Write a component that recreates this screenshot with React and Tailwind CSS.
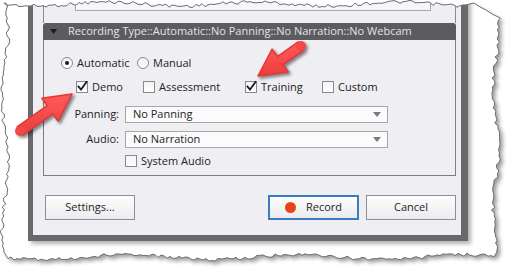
import React from "react";

const FONT = { fontFamily: "'Open Sans', 'Noto Sans', sans-serif" };

// --- torn paper edge ---
function rnd(i) {
  const x = Math.sin(i * 12.9898 + 78.233) * 43758.5453;
  return x - Math.floor(x);
}

function tornPath() {
  const pts = [];
  let k = 0;
  const j = (a) => (rnd(k++) - 0.5) * a;
  for (let x = 4; x <= 468; x += 3) pts.push([x, 4 + Math.sin(x / 23) * 2 + j(3.5)]);
  pts.push([474, 3]);
  pts.push([480, 7]);
  pts.push([486, 10]);
  pts.push([492, 14]);
  for (let y = 18; y <= 254; y += 3) pts.push([496 + Math.sin(y / 19) * 3 + j(4), y]);
  for (let x = 494; x >= 6; x -= 3) pts.push([x, 257 + Math.sin(x / 27) * 2.5 + j(3.5)]);
  for (let y = 252; y >= 2; y -= 3) pts.push([5 + Math.sin(y / 21) * 3 + j(4), y]);
  return "M" + pts.map((p) => p[0].toFixed(1) + "," + p[1].toFixed(1)).join("L") + "Z";
}

const PAPER = tornPath();

// red annotation arrow from tail to tip
function arrowPoints(tail, tip, headLen, headHalf, shaftHalf) {
  const dx = tip[0] - tail[0];
  const dy = tip[1] - tail[1];
  const len = Math.hypot(dx, dy);
  const ux = dx / len, uy = dy / len;
  const nx = -uy, ny = ux;
  const bx = tip[0] - ux * headLen, by = tip[1] - uy * headLen;
  const p = [
    [tail[0] + nx * shaftHalf, tail[1] + ny * shaftHalf],
    [bx + nx * shaftHalf, by + ny * shaftHalf],
    [bx + nx * headHalf, by + ny * headHalf],
    tip,
    [bx - nx * headHalf, by - ny * headHalf],
    [bx - nx * shaftHalf, by - ny * shaftHalf],
    [tail[0] - nx * shaftHalf, tail[1] - ny * shaftHalf],
  ];
  return p.map((q) => q[0].toFixed(1) + "," + q[1].toFixed(1)).join(" ");
}

const Arrow = ({ tail, tip }) => {
  const pts = arrowPoints(tail, tip, 27, 14, 5);
  return (
    <g>
      <g transform="translate(2,2)" filter="url(#ashadow)" opacity="0.45">
        <polygon points={pts} fill="#000" strokeLinejoin="round" stroke="#000" strokeWidth="2" />
        <circle cx={tail[0]} cy={tail[1]} r="5" fill="#000" />
      </g>
      <polygon points={pts} fill="url(#ared)" stroke="#e53636" strokeWidth="1.5" strokeLinejoin="round" />
      <circle cx={tail[0]} cy={tail[1]} r="5" fill="#f04848" />
    </g>
  );
};

const Overlay = () => (
  <svg className="absolute inset-0 pointer-events-none" width="517" height="275" viewBox="0 0 517 275">
    <defs>
      <filter id="pblur" x="-10%" y="-10%" width="120%" height="120%">
        <feGaussianBlur stdDeviation="2" />
      </filter>
      <filter id="ashadow" x="-30%" y="-30%" width="160%" height="160%">
        <feGaussianBlur stdDeviation="1.5" />
      </filter>
      <linearGradient id="ared" x1="0" y1="0" x2="0" y2="1">
        <stop offset="0" stopColor="#ff5a5a" />
        <stop offset="1" stopColor="#ec3d3d" />
      </linearGradient>
      <mask id="outside">
        <rect width="517" height="275" fill="white" />
        <path d={PAPER} fill="black" />
      </mask>
    </defs>
    <path d={"M0,0H517V275H0Z" + PAPER} fill="#ffffff" fillRule="evenodd" />
    <g mask="url(#outside)">
      <path d={PAPER} transform="translate(3,3)" fill="#000" opacity="0.4" filter="url(#pblur)" />
    </g>
    <path d={PAPER} fill="none" stroke="#707070" strokeWidth="1" />
    <Arrow tail={[20, 131]} tip={[72, 94]} />
    <Arrow tail={[301, 46]} tip={[258, 76]} />
  </svg>
);

// --- controls ---
const CheckBox = ({ checked }) => (
  <span className="relative w-[12px] h-[12px] shrink-0 border border-[#8a8a8e] bg-gradient-to-b from-[#f4f4f6] to-[#ffffff]">
    {checked && (
      <svg className="absolute -left-[1px] -top-[2px]" width="13" height="13" viewBox="0 0 13 13">
        <path d="M2.5 6.5 L5 9.5 L10.5 2" fill="none" stroke="#1a1a1a" strokeWidth="1.8" strokeLinecap="square" />
      </svg>
    )}
  </span>
);

const Radio = ({ checked }) => (
  <span className="w-[12px] h-[12px] shrink-0 rounded-full border border-[#8a8a8e] bg-gradient-to-b from-[#f2f2f4] to-white flex items-center justify-center">
    {checked && <span className="w-[4px] h-[4px] rounded-full bg-[#1a1a1a]" />}
  </span>
);

const Check = ({ label, checked, w }) => (
  <div className={`flex items-center gap-[4px] ${w}`}>
    <CheckBox checked={checked} />
    <span>{label}</span>
  </div>
);

const SelectBox = ({ value }) => (
  <div className="w-[263px] h-[17px] border border-[#a6a6ab] bg-[#fbfbfc] flex items-center justify-between pl-[7px] pr-[6px]">
    <span>{value}</span>
    <svg width="8" height="5" viewBox="0 0 8 5">
      <path d="M0 0 H8 L4 5 Z" fill="#7a7a80" />
    </svg>
  </div>
);

const Button = ({ children, primary }) => (
  <button
    className={`h-[25px] flex items-center justify-center gap-[10px] bg-gradient-to-b from-[#fdfdfd] to-[#ececef] text-[11px] text-[#1e1e1e] ${
      primary ? "w-[91px] border-2 border-[#3a7cc0]" : "w-[90px] border border-[#8d8d99]"
    }`}
  >
    {children}
  </button>
);

export default function App() {
  return (
    <div className="relative w-[517px] h-[275px] overflow-hidden bg-white text-[11px] text-[#222]" style={FONT}>
      <div className="pl-[28px]">
        <div className="w-[440px] -mt-[16px] bg-[#efeff3] border-l-[5px] border-r-[7px] border-b-[6px] border-[#6a686d] shadow-[3px_3px_4px_rgba(0,0,0,0.3)] pb-[15px]">
          {/* previous section */}
          <div className="ml-[10px] w-[413px] h-[39px] border-x border-[#8b8b90] pl-[31px]">
            <div className="w-[356px] h-[27px] border border-[#a7a7ac] bg-[#f6f6f8]" />
          </div>

          {/* recording type header */}
          <div className="ml-[10px] w-[413px] h-[17px] rounded-t-[3px] bg-[#5c5b5f] flex items-center pl-[7px] gap-[11px] text-[#e4e4e6]">
            <svg width="7" height="5" viewBox="0 0 7 5">
              <path d="M0 0 H7 L3.5 5 Z" fill="#1c1c1c" />
            </svg>
            <span>Recording Type::Automatic::No Panning::No Narration::No Webcam</span>
          </div>

          {/* group body */}
          <div className="ml-[10px] w-[413px] h-[136px] border-x border-b border-[#7d7d82] flex flex-col">
            <div className="mt-[16px] h-[14px] flex items-center pl-[17px]">
              <div className="w-[76px] flex items-center gap-[4px]">
                <Radio checked />
                <span>Automatic</span>
              </div>
              <div className="flex items-center gap-[4px]">
                <Radio />
                <span>Manual</span>
              </div>
            </div>

            <div className="mt-[10px] h-[14px] flex items-center pl-[32px]">
              <Check label="Demo" checked w="w-[67px]" />
              <Check label="Assessment" w="w-[102px]" />
              <Check label="Training" checked w="w-[77px]" />
              <Check label="Custom" />
            </div>

            <div className="mt-[12px] flex items-center">
              <span className="w-[81px] text-right pr-[6px]">Panning:</span>
              <SelectBox value="No Panning" />
            </div>

            <div className="mt-[8px] flex items-center">
              <span className="w-[81px] text-right pr-[6px]">Audio:</span>
              <SelectBox value="No Narration" />
            </div>

            <div className="mt-[6px] h-[14px] flex items-center pl-[81px]">
              <Check label="System Audio" />
            </div>
          </div>

          {/* buttons */}
          <div className="mt-[19px] flex items-center pl-[12px] pr-[5px]">
            <Button>Settings...</Button>
            <div className="ml-auto flex gap-[7px]">
              <Button primary>
                <span className="w-[11px] h-[11px] rounded-full bg-[#e8421c]" />
                <span>Record</span>
              </Button>
              <Button>Cancel</Button>
            </div>
          </div>
        </div>
      </div>
      <Overlay />
    </div>
  );
}
